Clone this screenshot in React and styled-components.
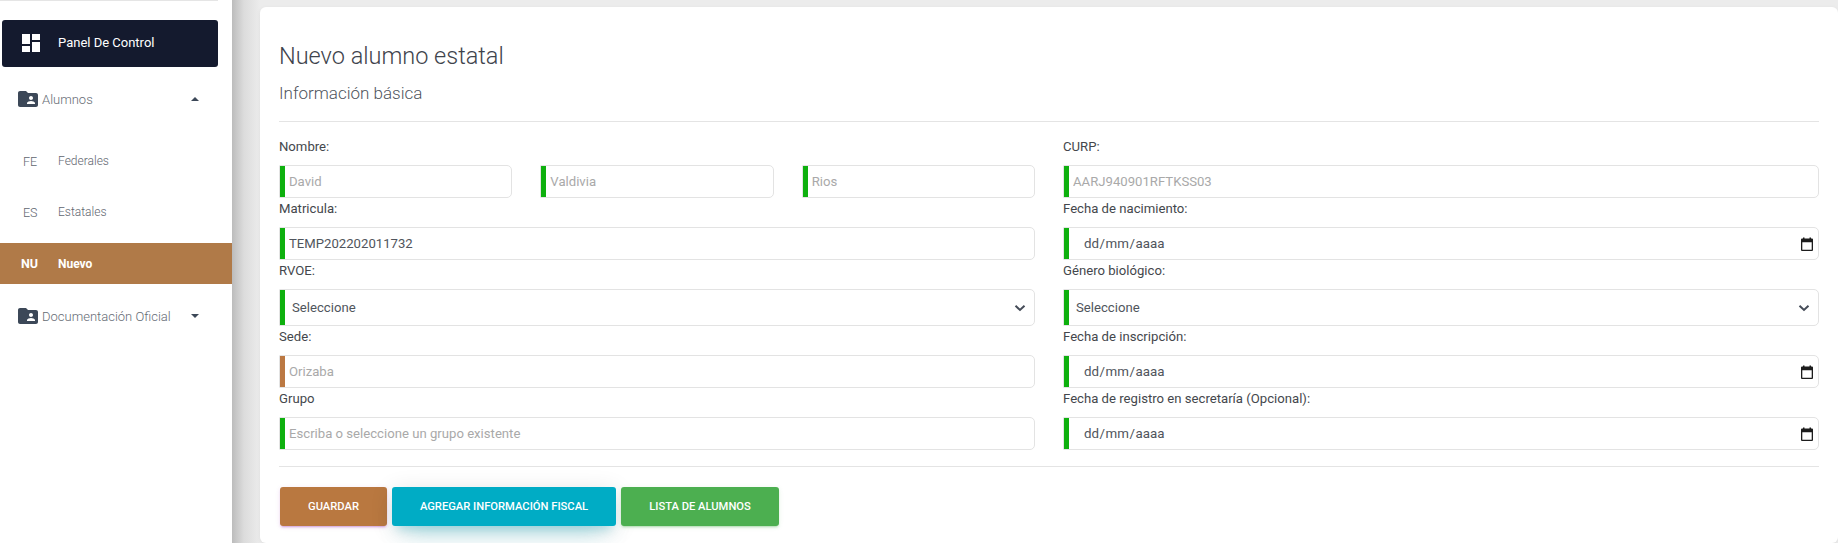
import React from "react";
import styled, { createGlobalStyle } from "styled-components";

const GlobalStyle = createGlobalStyle`
  html, body {
    margin: 0;
    height: 100%;
    overflow: hidden;
    background: #ececec;
    font-family: Roboto, "Liberation Sans", sans-serif;
  }
  * {
    box-sizing: border-box;
  }
`;

const Page = styled.div`
  display: flex;
  width: 1838px;
  height: 543px;
  overflow: hidden;
`;

const Sidebar = styled.aside`
  flex: 0 0 232px;
  background: #fff;
`;

const TopLine = styled.div`
  width: 218px;
  height: 1px;
  background: #e5e5e5;
`;

const DashLink = styled.div`
  display: flex;
  align-items: center;
  width: 216px;
  height: 47px;
  margin: 19px 0 0 2px;
  padding-left: 17px;
  border-radius: 3px;
  background: #141a2e;
  color: #fff;
  font-size: 13px;
  line-height: 45px;
  svg {
    margin-right: 15px;
    margin-top: -2px;
  }
  span {
    margin-top: -2px;
  }
`;

const MenuGroup = styled.div`
  display: flex;
  align-items: center;
  height: 24px;
  margin-top: ${(p) => p.$top}px;
  padding-left: 16px;
  color: #666c75;
  font-size: 13px;
  font-weight: 300;
  span {
    margin-left: 2px;
  }
`;

const Caret = styled.i`
  width: 0;
  height: 0;
  margin-left: auto;
  margin-right: ${(p) => p.$right}px;
  border-left: 4px solid transparent;
  border-right: 4px solid transparent;
  border-top: ${(p) => (p.$up ? "0" : "4px solid #3c4858")};
  border-bottom: ${(p) => (p.$up ? "4px solid #3c4858" : "0")};
`;

const SubItem = styled.div`
  display: flex;
  align-items: center;
  height: ${(p) => (p.$active ? 41 : 24)}px;
  margin-top: ${(p) => p.$top}px;
  padding-left: ${(p) => (p.$active ? 21 : 23)}px;
  background: ${(p) => (p.$active ? "#b07a48" : "transparent")};
  color: ${(p) => (p.$active ? "#fff" : "#5f6670")};
  font-size: 12px;
  font-weight: ${(p) => (p.$active ? 700 : 300)};
`;

const Mini = styled.span`
  width: ${(p) => (p.$active ? 37 : 35)}px;
  font-size: 12.5px;
`;

const Main = styled.main`
  flex: 1;
  padding: 7px 0 0 28px;
  background: linear-gradient(to right, #bcbcbc 0, #dcdcdc 12px, #e8e8e8 24px, #ececec 28px);
`;

const Card = styled.section`
  height: 536px;
  padding: 35px 19px 0;
  border-radius: 6px;
  background: #fff;
  box-shadow: 0 1px 4px rgba(0, 0, 0, 0.06);
`;

const Title = styled.h1`
  margin: 0;
  color: #3e434c;
  font-size: 23.5px;
  font-weight: 300;
  line-height: 29px;
`;

const Subtitle = styled.h2`
  margin: 10px 0 0;
  color: #50555d;
  font-size: 17px;
  font-weight: 300;
  line-height: 24px;
`;

const Rule = styled.hr`
  margin: ${(p) => p.$top}px 0 ${(p) => p.$bottom}px;
  border: 0;
  border-top: 1px solid #e4e4e4;
`;

const Columns = styled.div`
  display: grid;
  grid-template-columns: 1fr 1fr;
  column-gap: 28px;
`;

const Label = styled.label`
  display: block;
  margin-bottom: 8px;
  color: #44474c;
  font-size: 13.15px;
  line-height: 21px;
`;

const NameRow = styled.div`
  display: grid;
  grid-template-columns: repeat(3, 1fr);
  column-gap: 28px;
`;

const Box = styled.div`
  display: flex;
  align-items: center;
  height: 33px;
  padding: 0 4px 0 5px;
  border: 1px solid #e3e3e3;
  border-radius: 1px 5px 5px 1px;
  background: #fff;
  box-shadow: inset 5px 0 0 ${(p) => p.$mark || "#0eb00e"};
`;

const SelectBox = styled(Box)`
  height: 37px;
`;

const TextInput = styled.input`
  width: 100%;
  padding: 0 0 0 4px;
  border: 0;
  outline: 0;
  background: transparent;
  color: #50555c;
  font-family: inherit;
  font-size: 13.15px;
  &::placeholder {
    color: #a9a9a9;
    opacity: 1;
  }
`;

const Select = styled.select`
  flex: 1;
  height: 100%;
  padding: 0 0 0 7px;
  border: 0;
  outline: 0;
  appearance: none;
  background: transparent;
  color: #50555c;
  font-family: inherit;
  font-size: 13.15px;
`;

const Chevron = styled.svg`
  flex: none;
  margin-right: 4px;
`;

const DateText = styled.span`
  flex: 1;
  padding-left: 15px;
  color: #50555c;
  font-size: 13.33px;
`;

const DateSep = styled.span`
  margin: 0 0.5px;
`;

const Buttons = styled.div`
  display: flex;
  gap: 5px;
  padding-left: 1px;
`;

const Button = styled.button`
  width: ${(p) => p.$w}px;
  height: 39px;
  padding: 0;
  border: 0;
  border-radius: 3px;
  background: ${(p) => p.$bg};
  color: #fff;
  font-family: inherit;
  font-size: 11.2px;
  font-weight: 500;
  text-transform: uppercase;
  box-shadow: ${(p) => p.$shadow};
`;

const FolderIcon = () => (
  <svg width="24" height="24" viewBox="0 0 24 24" fill="#3c4858">
    <path d="M20 6h-8l-2-2H4c-1.1 0-1.99.9-1.99 2L2 18c0 1.1.9 2 2 2h16c1.1 0 2-.9 2-2V8c0-1.1-.9-2-2-2zm-5 3c1.1 0 2 .9 2 2s-.9 2-2 2-2-.9-2-2 .9-2 2-2zm4 8h-8v-1c0-1.33 2.67-2 4-2s4 .67 4 2v1z" />
  </svg>
);

const CalendarIcon = () => (
  <svg width="14" height="14" viewBox="0 0 14 14">
    <path
      fill="#1d1d1d"
      d="M1 2.5A1 1 0 0 1 2 1.500h1V.5h1.500v1h5v-1H11v1h1a1 1 0 0 1 1 1V13a1 1 0 0 1-1 1H2a1 1 0 0 1-1-1zM2.300 5.200v7.500h9.400V5.200z"
    />
  </svg>
);

const DateField = ({ label }) => (
  <div>
    <Label>{label}</Label>
    <Box>
      <DateText>
        dd<DateSep>/</DateSep>mm<DateSep>/</DateSep>aaaa
      </DateText>
      <CalendarIcon />
    </Box>
  </div>
);

const SelectField = ({ label }) => (
  <div>
    <Label>{label}</Label>
    <SelectBox>
      <Select defaultValue="">
        <option value="">Seleccione</option>
      </Select>
      <Chevron width="12" height="8" viewBox="0 0 12 8">
        <path d="M1.500 1.800 6 6l4.500-4.200" fill="none" stroke="#454c58" strokeWidth="2" />
      </Chevron>
    </SelectBox>
  </div>
);

const TextField = ({ label, placeholder, value, mark }) => (
  <div>
    <Label>{label}</Label>
    <Box $mark={mark}>
      <TextInput placeholder={placeholder} defaultValue={value} />
    </Box>
  </div>
);

const names = ["David", "Valdivia", "Rios"];

const App = () => {
  return (
    <Page>
      <GlobalStyle />
      <Sidebar>
        <TopLine />
        <DashLink>
          <svg width="24" height="24" viewBox="0 0 24 24" fill="#fff">
            <path d="M3 13h8V3H3v10zm0 8h8v-6H3v6zm10 0h8V11h-8v10zm0-18v6h8V3h-8z" />
          </svg>
          <span>Panel De Control</span>
        </DashLink>
        <MenuGroup $top={20}>
          <FolderIcon />
          <span>Alumnos</span>
          <Caret $up $right={33} />
        </MenuGroup>
        <SubItem $top={38}>
          <Mini>FE</Mini>
          Federales
        </SubItem>
        <SubItem $top={27}>
          <Mini>ES</Mini>
          Estatales
        </SubItem>
        <SubItem $top={19} $active>
          <Mini $active>NU</Mini>
          Nuevo
        </SubItem>
        <MenuGroup $top={20}>
          <FolderIcon />
          <span>Documentación Oficial</span>
          <Caret $right={33} />
        </MenuGroup>
      </Sidebar>
      <Main>
        <Card>
          <Title>Nuevo alumno estatal</Title>
          <Subtitle>Información básica</Subtitle>
          <Rule $top={16} $bottom={14} />
          <Columns>
            <div>
              <Label>Nombre:</Label>
              <NameRow>
                {names.map((name) => (
                  <Box key={name}>
                    <TextInput placeholder={name} />
                  </Box>
                ))}
              </NameRow>
              <TextField label="Matricula:" value="TEMP202202011732" />
              <SelectField label="RVOE:" />
              <TextField label="Sede:" placeholder="Orizaba" mark="#bb7842" />
              <TextField label="Grupo" placeholder="Escriba o seleccione un grupo existente" />
            </div>
            <div>
              <TextField label="CURP:" placeholder="AARJ940901RFTKSS03" />
              <DateField label="Fecha de nacimiento:" />
              <SelectField label="Género biológico:" />
              <DateField label="Fecha de inscripción:" />
              <DateField label="Fecha de registro en secretaría (Opcional):" />
            </div>
          </Columns>
          <Rule $top={16} $bottom={20} />
          <Buttons>
            <Button
              $w={107}
              $bg="#b97840"
              $shadow="0 2px 2px rgba(156,39,176,0.14), 0 3px 1px -2px rgba(156,39,176,0.2), 0 1px 5px rgba(156,39,176,0.12)"
            >
              Guardar
            </Button>
            <Button
              $w={224}
              $bg="#00acc5"
              $shadow="0 14px 26px -12px rgba(0,172,193,0.42), 0 4px 23px rgba(0,0,0,0.12), 0 8px 10px -5px rgba(0,172,193,0.2)"
            >
              Agregar información fiscal
            </Button>
            <Button
              $w={158}
              $bg="#4caf50"
              $shadow="0 2px 2px rgba(76,175,80,0.14), 0 3px 1px -2px rgba(76,175,80,0.2), 0 1px 5px rgba(76,175,80,0.12)"
            >
              Lista de alumnos
            </Button>
          </Buttons>
        </Card>
      </Main>
    </Page>
  );
};

export default App;
